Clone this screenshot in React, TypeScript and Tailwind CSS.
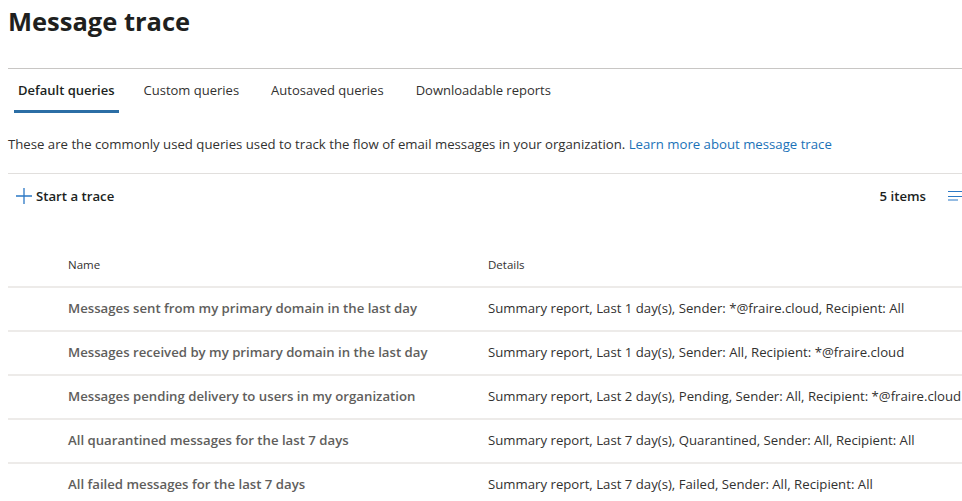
import React from "react";

const rows = [
  {
    name: "Messages sent from my primary domain in the last day",
    details: "Summary report, Last 1 day(s), Sender: *@fraire.cloud, Recipient: All",
  },
  {
    name: "Messages received by my primary domain in the last day",
    details: "Summary report, Last 1 day(s), Sender: All, Recipient: *@fraire.cloud",
  },
  {
    name: "Messages pending delivery to users in my organization",
    details: "Summary report, Last 2 day(s), Pending, Sender: All, Recipient: *@fraire.cloud",
  },
  {
    name: "All quarantined messages for the last 7 days",
    details: "Summary report, Last 7 day(s), Quarantined, Sender: All, Recipient: All",
  },
  {
    name: "All failed messages for the last 7 days",
    details: "Summary report, Last 7 day(s), Failed, Sender: All, Recipient: All",
  },
];

const tabs = ["Default queries", "Custom queries", "Autosaved queries", "Downloadable reports"];

export default function App() {
  return (
    <div className="w-[962px] h-[501px] overflow-hidden bg-white text-[#323130] font-['Open_Sans',sans-serif]">
      <h1 className="pl-2 pt-[1px] h-[68px] text-[25.5px] leading-[40px] font-bold text-[#201f1e]">
        Message trace
      </h1>
      <div className="ml-2 w-[1000px] border-t border-[#c8c6c4]" />

      <div className="flex pl-[14px] h-[44px] pt-[3px] items-stretch">
        {tabs.map((t, i) => (
          <div
            key={t}
            className={
              i === 0
                ? "flex items-center px-1 mr-[21px] border-b-[3px] border-[#2b6ea5] text-[13px] font-semibold text-[#201f1e]"
                : "flex items-center px-1 mr-[24px] border-b-[3px] border-transparent text-[13px] text-[#323130]"
            }
          >
            {t}
          </div>
        ))}
      </div>

      <p className="pl-2 pt-[21px] text-[13.2px] leading-[20px] text-[#323130]">
        These are the commonly used queries used to track the flow of email messages in your organization.{" "}
        <a className="text-[#1a72b8]">Learn more about message trace</a>
      </p>
      <div className="ml-2 mt-[19px] w-[1000px] border-t border-[#e1dfdd]" />

      <div className="flex items-center justify-between h-[45px] pl-[16px]">
        <div className="flex items-center gap-[4px] text-[13.2px] font-semibold text-[#201f1e]">
          <svg width="16" height="16" viewBox="0 0 16 16">
            <path d="M8 0v16M0 8h16" stroke="#2b78c5" strokeWidth="1.3" fill="none" />
          </svg>
          Start a trace
        </div>
        <div className="flex items-center">
          <span className="text-[13.2px] font-semibold text-[#201f1e] mr-[21px]">5 items</span>
          <svg width="16" height="16" viewBox="0 0 16 16" className="mr-[-1px]">
            <path d="M1 3.5h15M1 8.5h15M1 12h10" stroke="#2b78c5" strokeWidth="1.2" fill="none" />
          </svg>
        </div>
      </div>

      <div className="ml-2 mt-[25px] w-[1000px]">
        <div className="flex h-[44px] items-center pl-[60px] text-[11.5px] text-[#323130] border-b-2 border-[#edebe9]">
          <div className="w-[420px]">Name</div>
          <div>Details</div>
        </div>
        {rows.map((r) => (
          <div
            key={r.name}
            className="flex h-[44px] items-center pl-[60px] border-b-2 border-[#edebe9] text-[13.2px]"
          >
            <div className="w-[420px] font-semibold text-[#605e5c]">{r.name}</div>
            <div className="whitespace-nowrap text-[#323130]">{r.details}</div>
          </div>
        ))}
      </div>
    </div>
  );
}
